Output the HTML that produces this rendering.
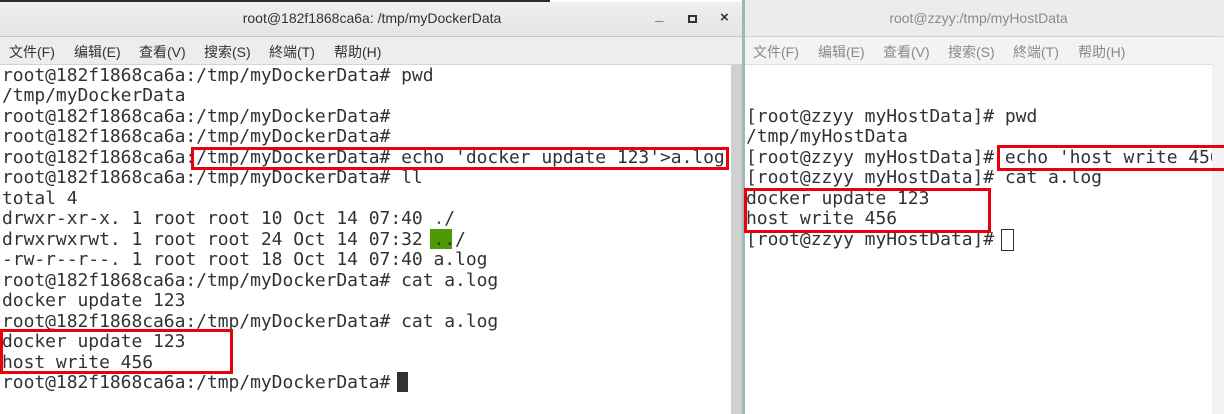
<!DOCTYPE html>
<html><head><meta charset="utf-8"><style>
*{margin:0;padding:0;box-sizing:border-box}
body{width:1224px;height:414px;overflow:hidden;background:#fff;position:relative;font-family:"Liberation Sans","Noto Sans CJK SC",sans-serif}
.abs{position:absolute}
.term{position:absolute;font-family:"DejaVu Sans Mono","Liberation Mono",monospace;font-size:18px;line-height:20.47px;color:#2e3436;white-space:pre;letter-spacing:-0.05px}
.menu{position:absolute;top:42px;font-size:14px;color:#2e3436;white-space:nowrap}
.menu span{display:inline-block;width:65px}
.box{position:absolute;border:3px solid #e8000b}
</style></head><body>
<!-- left window -->
<div class="abs" style="left:0;top:0;width:550px;height:2px;background:#2b2b2b"></div>
<div class="abs" style="left:0;top:2px;width:744px;height:35px;background:linear-gradient(#f0f0f0,#e4e4e4);border-bottom:1px solid #c8c8c8"></div>
<div class="abs" style="left:0;top:10px;width:744px;text-align:center;font-size:14px;color:#2e3436">root@182f1868ca6a: /tmp/myDockerData</div>
<div class="abs" style="left:655px;top:7px;font-size:15px;font-weight:bold;color:#2e3436">_</div>
<div class="abs" style="left:688px;top:15px;width:9px;height:8px;border:2px solid #2e3436"></div>
<div class="abs" style="left:720px;top:9px;font-size:15px;font-weight:bold;color:#2e3436">×</div>
<div class="abs" style="left:0;top:37px;width:744px;height:28px;background:#ededed;border-bottom:1px solid #d4d4d4"></div>
<div class="menu" style="left:9px"><span>文件(F)</span><span>编辑(E)</span><span>查看(V)</span><span>搜索(S)</span><span>終端(T)</span><span>帮助(H)</span></div>
<div class="abs" style="left:731px;top:65px;width:11px;height:349px;background:#cfcfcf"></div>
<div class="abs" style="left:742px;top:0;width:3px;height:414px;background:#9fb7b7"></div>
<div class="abs" style="left:430px;top:229px;width:22px;height:20px;background:#4e9a06"></div>
<div class="abs" style="left:397px;top:372px;width:11px;height:20px;background:#2e3436"></div>
<div class="term" style="left:2px;top:66px">root@182f1868ca6a:/tmp/myDockerData# pwd
/tmp/myDockerData
root@182f1868ca6a:/tmp/myDockerData#
root@182f1868ca6a:/tmp/myDockerData#
root@182f1868ca6a:/tmp/myDockerData# echo 'docker update 123'>a.log
root@182f1868ca6a:/tmp/myDockerData# ll
total 4
drwxr-xr-x. 1 root root 10 Oct 14 07:40 <span style="color:#3465a4">.</span>/
drwxrwxrwt. 1 root root 24 Oct 14 07:32 ../
-rw-r--r--. 1 root root 18 Oct 14 07:40 a.log
root@182f1868ca6a:/tmp/myDockerData# cat a.log
docker update 123
root@182f1868ca6a:/tmp/myDockerData# cat a.log
docker update 123
host write 456
root@182f1868ca6a:/tmp/myDockerData# </div>
<div class="box" style="left:191px;top:147px;width:538px;height:23px"></div>
<div class="box" style="left:0;top:329px;width:233px;height:45px"></div>
<!-- right window -->
<div class="abs" style="left:745px;top:0;width:479px;height:37px;background:#ececec;border-bottom:1px solid #d0d0d0"></div>
<div class="abs" style="left:745px;top:10px;width:467px;text-align:center;font-size:14px;color:#8a8a8a">root@zzyy:/tmp/myHostData</div>
<div class="abs" style="left:745px;top:37px;width:479px;height:28px;background:#f3f3f3;border-bottom:1px solid #dedede"></div>
<div class="menu" style="left:753px;color:#8a8a8a"><span>文件(F)</span><span>编辑(E)</span><span>查看(V)</span><span>搜索(S)</span><span>終端(T)</span><span>帮助(H)</span></div>
<div class="term" style="left:746px;top:66px;width:466px;overflow:hidden">

[root@zzyy myHostData]# pwd
/tmp/myHostData
[root@zzyy myHostData]# echo 'host write 456'>a.log
[root@zzyy myHostData]# cat a.log
docker update 123
host write 456
[root@zzyy myHostData]# </div>
<div class="abs" style="left:1001px;top:229px;width:13px;height:22px;border:1px solid #2e3436"></div>
<div class="abs" style="left:1212px;top:37px;width:12px;height:377px;background:#f2f2f2"></div>
<div class="box" style="left:997px;top:145px;width:230px;height:26px"></div>
<div class="box" style="left:744px;top:188px;width:247px;height:45px"></div>
</body></html>
